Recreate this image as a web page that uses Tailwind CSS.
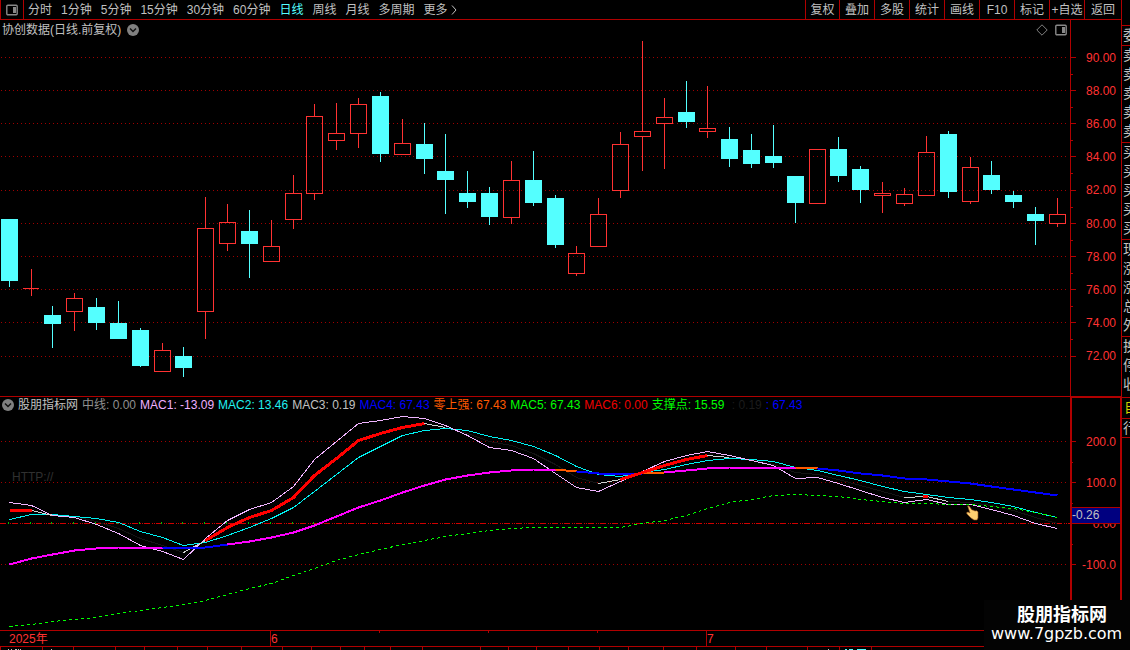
<!DOCTYPE html>
<html lang="zh-CN">
<head>
<meta charset="utf-8">
<title>协创数据 日线</title>
<script src="https://cdn.jsdelivr.net/npm/@tailwindcss/browser@4"></script>
</head>
<body class="bg-black text-[#c0c0c0] text-xs leading-4 font-['Liberation_Sans','Noto_Sans_CJK_SC',sans-serif]">
<div class="relative flex h-screen overflow-hidden">
  <main class="flex min-w-0 flex-1 flex-col">
    <header class="flex h-5 flex-none border-b border-[#b00000]">
      <button aria-label="侧栏" class="flex w-6 flex-none items-center justify-center border-x border-[#b00000]">
        <svg width="12" height="12" viewBox="0 0 12 12"><rect x=".8" y="1.2" width="10.4" height="9.6" rx="1" fill="none" stroke="#888" stroke-width="1.4"/><rect x="7" y="3" width="3" height="6" fill="#888"/></svg>
      </button>
      <nav class="flex flex-1 items-center gap-[9px] whitespace-nowrap pl-1">
        <button>分时</button><button>1分钟</button><button>5分钟</button><button>15分钟</button><button>30分钟</button><button>60分钟</button><button class="text-[#54ffff]">日线</button><button>周线</button><button>月线</button><button>多周期</button>
        <button class="flex items-center gap-[3px]">更多<svg width="6" height="10" viewBox="0 0 6 10" fill="none" stroke="#c0c0c0"><path d="M1 .5 5 5 1 9.5"/></svg></button>
      </nav>
      <nav class="flex flex-none whitespace-nowrap">
        <button class="w-[34px] border-l border-[#b00000]">复权</button>
        <button class="w-[35px] border-l border-[#b00000]">叠加</button>
        <button class="w-[35px] border-l border-[#b00000]">多股</button>
        <button class="w-[35px] border-l border-[#b00000]">统计</button>
        <button class="w-[35px] border-l border-[#b00000]">画线</button>
        <button class="w-[35px] border-l border-[#b00000]">F10</button>
        <button class="w-[35px] border-l border-[#b00000]">标记</button>
        <button class="w-[35px] border-l border-[#b00000]">+自选</button>
        <button class="w-[37px] border-l border-[#b00000]">返回</button>
      </nav>
    </header>

    <section class="flex min-h-0 flex-[376_1_0px]">
      <div class="relative min-w-0 flex-1">
        <svg id="price" class="absolute inset-0 h-full w-full" viewBox="0 20 1070 376" preserveAspectRatio="none" shape-rendering="crispEdges"></svg>
        <div class="relative flex items-center justify-between pl-[2px] pr-[3px] pt-[2px]">
          <h1 class="flex items-center gap-[6px]">协创数据(日线.前复权)
            <svg width="12" height="12" viewBox="0 0 12 12"><circle cx="6" cy="6" r="6" fill="#808080"/><path d="M3 4.5 6 7.5 9 4.5" fill="none" stroke="#111" stroke-width="1.5"/></svg>
          </h1>
          <div class="flex items-center gap-[7px]">
            <svg width="12" height="12" viewBox="0 0 12 12" fill="none" stroke="#808080"><path d="M6 .8 11.2 6 6 11.2 .8 6Z"/></svg>
            <svg width="12" height="12" viewBox="0 0 12 12"><rect x=".8" y="1.2" width="10.4" height="9.6" rx="1" fill="none" stroke="#888" stroke-width="1.4"/><rect x="7" y="3" width="3" height="6" fill="#888"/></svg>
          </div>
        </div>
      </div>
      <div class="relative w-[51px] flex-none border-l border-[#b00000]">
        <svg id="priceTicks" class="absolute inset-0 h-full w-full" viewBox="1071 20 50 376" preserveAspectRatio="none" shape-rendering="crispEdges"></svg>
        <div class="relative flex h-full flex-col justify-between pb-8 pr-[5px] pt-[30px] text-right text-[#ff3232]">
          <span>90.00</span><span>88.00</span><span>86.00</span><span>84.00</span><span>82.00</span><span>80.00</span><span>78.00</span><span>76.00</span><span>74.00</span><span>72.00</span>
        </div>
      </div>
    </section>

    <section class="flex min-h-0 flex-[234_1_0px]">
      <div class="relative min-w-0 flex-1 border-t border-[#b00000]">
        <svg id="macd" class="absolute inset-0 h-full w-full" viewBox="0 397 1070 233" preserveAspectRatio="none" shape-rendering="crispEdges"></svg>
        <div class="relative flex items-center gap-1 whitespace-nowrap pl-[2px]">
          <h2 class="flex items-center gap-1">
            <svg width="12" height="12" viewBox="0 0 12 12"><circle cx="6" cy="6" r="6" fill="#808080"/><path d="M3 4.5 6 7.5 9 4.5" fill="none" stroke="#111" stroke-width="1.5"/></svg>股朋指标网</h2>
          <span class="text-[#909090]">中线: 0.00</span>
          <span class="text-[#f0b0ff]">MAC1: -13.09</span>
          <span class="text-[#20f0f0]">MAC2: 13.46</span>
          <span>MAC3: 0.19</span>
          <span class="text-[#0000ff]">MAC4: 67.43</span>
          <span class="text-[#ff5a00]">零上强: 67.43</span>
          <span class="text-[#00ff00]">MAC5: 67.43</span>
          <span class="text-[#f00000]">MAC6: 0.00</span>
          <span class="text-[#00ff00]">支撑点: 15.59</span>
          <span class="text-[#1c1c1c]">&nbsp;: 0.19</span>
          <span class="text-[#0000ff]">: 67.43</span>
        </div>
        <span class="absolute left-3 top-[72px] text-[#303030]">HTTP://</span>
      </div>
      <div class="relative w-[51px] flex-none border-l-2 border-r border-t-2 border-[#b00000]">
        <svg id="macdTicks" class="absolute inset-0 h-full w-full" viewBox="1072 398 48 232" preserveAspectRatio="none" shape-rendering="crispEdges"></svg>
        <div class="relative flex h-full flex-col justify-between pb-[57px] pr-1 pt-9 text-right text-[#ff3232]">
          <span>200.0</span><span>100.0</span><span>0.00</span><span>-100.0</span>
        </div>
        <div class="absolute inset-x-0 top-[109px] h-[17px] border-y border-[#b00000] bg-[#000080] leading-[15px]">-0.26</div>
      </div>
    </section>

    <footer class="flex-none">
      <div class="relative h-4 border-t border-[#b00000] text-[#ff3232]">
        <svg id="dates" class="absolute inset-0 h-full w-full" viewBox="0 631 1121 15" preserveAspectRatio="none" shape-rendering="crispEdges"></svg>
        <div class="relative grid h-full grid-cols-[271fr_436fr_414fr] leading-4"><span class="pl-[9px]">2025年</span><span>6</span><span>7</span></div>
      </div>
      <div class="h-1 border-t border-[#b00000]">
        <svg id="tabs" class="block h-full w-full" viewBox="0 647 1121 3" preserveAspectRatio="none" shape-rendering="crispEdges"></svg>
      </div>
    </footer>
  </main>

  <aside class="flex w-[9px] flex-none flex-col overflow-hidden border-l border-[#b00000] text-[14px] leading-[19px]">
    <div class="h-[25px] flex-none"></div>
    <div class="h-5 flex-none overflow-hidden border-t border-[#b00000] pl-px">委</div>
    <div class="flex h-[97px] flex-none flex-col border-t border-[#b00000] pl-px"><span class="w-4">卖</span><span class="w-4">卖</span><span class="w-4">卖</span><span class="w-4">卖</span><span class="w-4">卖</span></div>
    <div class="flex h-[97px] flex-none flex-col border-t border-[#b00000] pl-px"><span class="w-4">买</span><span class="w-4">买</span><span class="w-4">买</span><span class="w-4">买</span><span class="w-4">买</span></div>
    <div class="flex h-[97px] flex-none flex-col border-t border-[#b00000] pl-px"><span class="w-4">现</span><span class="w-4">涨</span><span class="w-4">涨</span><span class="w-4">总</span><span class="w-4">外</span></div>
    <div class="flex h-[61px] flex-none flex-col border-t border-[#b00000] pl-px"><span class="w-4">换</span><span class="w-4">停</span><span class="w-4">收</span></div>
    <div class="h-[21px] flex-none overflow-hidden border-t border-[#b00000] pl-[2px] text-[#d0d000]">自</div>
    <div class="h-5 flex-none overflow-hidden border-y border-[#b00000] pl-px">行</div>
  </aside>

  <div class="absolute bottom-0 right-0 flex h-[50px] w-[146px] flex-col bg-[#030303] text-white">
    <strong class="pl-[33px] pt-[5px] text-lg leading-5">股朋指标网</strong>
    <a href="#" class="pl-[7px] font-['DejaVu_Sans',sans-serif] text-base leading-[18px]">www.7gpzb.com</a>
  </div>
</div>

<script>
const NS = 'http://www.w3.org/2000/svg';
function add(id, tag, attrs) {
  const e = document.createElementNS(NS, tag);
  for (const k in attrs) e.setAttribute(k, attrs[k]);
  document.getElementById(id).appendChild(e);
}
const box = (id, x, y, w, h, fill) => add(id, 'rect', {x, y, width: w, height: h, fill});
const GRID = '#a00000', RED = '#ff3232', CYAN = '#54ffff', EDGE = '#b00000';

// Price grid and ticks
[57, 90, 123, 156, 190, 223, 256, 289, 322, 356].forEach(y => {
  add('price', 'path', {d: `M1 ${y + .5}H1068`, stroke: GRID, 'stroke-dasharray': '1 3'});
  box('priceTicks', 1071, y, 5, 1, EDGE);
  if (y < 356) box('priceTicks', 1071, y + 17, 2, 1, EDGE);
});

// Candles: x, body top, body bottom, high, low, rising
[[1,219,281,219,287,0],[23,288,289,269,296,1],[44,315,324,306,348,0],[66,298,312,293,331,1],[88,307,323,298,330,0],
[110,323,339,301,339,0],[132,330,366,328,367,0],[154,350,372,343,372,1],[175,356,368,347,377,0],[197,228,312,197,339,1],
[219,222,244,204,251,1],[241,231,244,210,278,0],[263,246,262,220,262,1],[285,193,220,175,229,1],[306,116,194,104,200,1],
[328,133,141,103,150,1],[350,104,134,98,148,1],[372,96,154,92,162,0],[394,143,155,119,155,1],[416,144,159,123,174,0],
[437,171,180,134,214,0],[459,193,202,171,208,0],[481,193,217,187,225,0],[503,180,218,161,224,1],[525,180,203,151,206,0],
[547,198,245,195,248,0],[568,253,274,246,276,1],[590,214,247,198,247,1],[612,144,191,132,198,1],[634,131,137,41,171,1],
[656,117,124,98,169,1],[678,112,122,81,128,0],[699,128,132,86,138,1],[721,139,159,127,167,0],[743,150,164,134,168,0],
[765,156,163,125,168,0],[787,176,203,176,223,0],[809,149,204,149,204,1],[830,149,176,137,182,0],[852,169,190,166,203,0],
[874,193,196,182,213,1],[896,194,204,188,206,1],[918,152,196,136,196,1],[940,134,192,131,198,0],[962,167,202,157,204,1],
[983,175,190,161,194,0],[1005,195,202,191,208,0],[1027,214,221,207,245,0],[1049,214,224,198,227,1]
].forEach(([x, t, b, hi, lo, up]) => {
  if (!up) {
    box('price', x, t, 17, b - t, CYAN);
    box('price', x + 8, hi, 1, lo - hi, CYAN);
  } else {
    box('price', x + 8, hi, 1, t - hi, RED);
    box('price', x + 8, b, 1, lo - b, RED);
    if (b - t < 2) box('price', x, t, 16, 1, RED);
    else add('price', 'rect', {x: x + .5, y: t + .5, width: 16, height: b - t - 1, fill: 'none', stroke: RED});
  }
});

// Indicator grid
[441, 482, 564].forEach(y => add('macd', 'path', {d: `M1 ${y + .5}H1068`, stroke: GRID, 'stroke-dasharray': '1 3'}));
add('macd', 'path', {d: 'M0 523.5H1070', stroke: '#d00000', 'stroke-dasharray': '6 2 1 1 1 1'});
[441, 482, 523, 564].forEach(y => box('macdTicks', 1072, y, 4, 1, EDGE));
[462, 503, 544].forEach(y => box('macdTicks', 1072, y, 1, 1, EDGE));

const X = [9,31,52,74,96,118,140,162,183,205,227,249,271,293,314,336,358,380,402,424,445,467,489,511,533,555,576,598,620,642,664,686,707,729,751,773,795,817,838,860,882,904,926,948,970,991,1013,1035,1057];
X.slice(0, 15).forEach(x => box('macd', x - 1, 522, 1, 2, '#00c000'));
const M1 = [502,505,515,517,524,533,545,551,559,538,520,509,502,486,459,441,423,420,416,418,425,435,447,450,458,473,487,491,481,471,461,455,451,455,460,465,478,477,483,490,497,502,499,504,504,509,515,523,528];
const M2 = [519,514,514,516,518,522,531,537,545,542,535,527,518,507,491,474,457,446,435,430,428,430,436,440,446,455,466,474,476,472,469,464,460,458,459,461,467,470,475,480,486,491,494,497,499,502,506,512,517];
const M3 = [510,510,515,516,521,528,538,545,552,540,527,517,510,497,475,458,440,433,427,423,427,433,441,445,453,464,477,483,479,472,465,459,455,457,460,464,472,474,479,485,491,497,496,501,502,505,510,517,523];
const M4 = [564,558,554,550,548,547,547,547,548,547,544,541,537,532,525,516,507,500,492,485,479,475,472,470,469,469,471,473,474,473,472,470,468,467,467,467,467,468,470,473,475,478,479,481,483,486,489,492,495];
const G = [626,624,621,619,617,613,610,607,604,600,594,588,583,575,568,560,554,549,544,540,536,533,530,528,527,527,527,527,527,523,520,515,508,502,499,495,494,495,496,499,501,503,503,504,504,506,508,512,517];
function line(Y, from, to, color, w, dash) {
  let d = '';
  for (let i = from; i <= to; i++) d += (i > from ? 'L' : 'M') + (X[i] + .5) + ' ' + (Y[i] + .5);
  const a = {d, fill: 'none', stroke: color, 'stroke-width': w};
  if (dash) a['stroke-dasharray'] = dash;
  add('macd', 'path', a);
}
line(M3, 0, 48, '#141414', 1);
line(M2, 0, 48, '#00f0f0', 1);
line(M1, 0, 48, '#f0b4ff', 1);
[[1,2],[8,9],[19,20],[27,28],[32,33],[41,43]].forEach(([a, b]) => line(M3, a, b, '#d0d0d0', 1));
line(G, 0, 48, '#00ff00', 1, '3 3');
line(M4, 0, 7, '#ff00ff', 2);
line(M4, 7, 10, '#0000ff', 2);
line(M4, 10, 25, '#ff00ff', 2);
line(M4, 25, 26, '#ff5a00', 2);
line(M4, 26, 29, '#0000ff', 2);
line(M4, 29, 30, '#ff5a00', 2);
line(M4, 30, 36, '#ff00ff', 2);
line(M4, 36, 37, '#ff5a00', 2);
line(M4, 37, 48, '#0000ff', 2);
line(M3, 0, 1, '#ff0000', 3);
line(M3, 9, 19, '#ff0000', 3);
line(M3, 28, 32, '#ff0000', 3);
box('macd', 923, 495, 5, 3, '#ff0000');
// Hand pointer
add('macd', 'path', {d: 'M969 506q-2-1-1 1l2 6-2-1q-2 0-1 2l4 4 3 2h3l1-2 0-6q-1-2-3-1l-2-1-1 0Z', fill: '#ffd070', stroke: '#90501c', 'stroke-width': .6, 'shape-rendering': 'auto'});

// Date axis and the strip below it
box('dates', 270, 631, 1, 15, EDGE);
box('dates', 706, 631, 1, 15, EDGE);
[379, 488, 597].forEach(x => box('dates', x, 631, 1, 2, EDGE));
[0,42,73,115,144,177,207,241,282,311,340,364,390,422,480,508,536,568,599,628,663,696,735,766,807,839,871].forEach(x => box('tabs', x, 647, 1, 3, EDGE));
[[8,1],[11,1],[15,2],[18,1],[20,1],[51,1],[828,1]].forEach(([x, w]) => box('tabs', x, 649, w, 1, '#c0c0c0'));
[[845,2],[849,4],[857,9]].forEach(([x, w]) => box('tabs', x, 649, w, 1, CYAN));
</script>
</body>
</html>
